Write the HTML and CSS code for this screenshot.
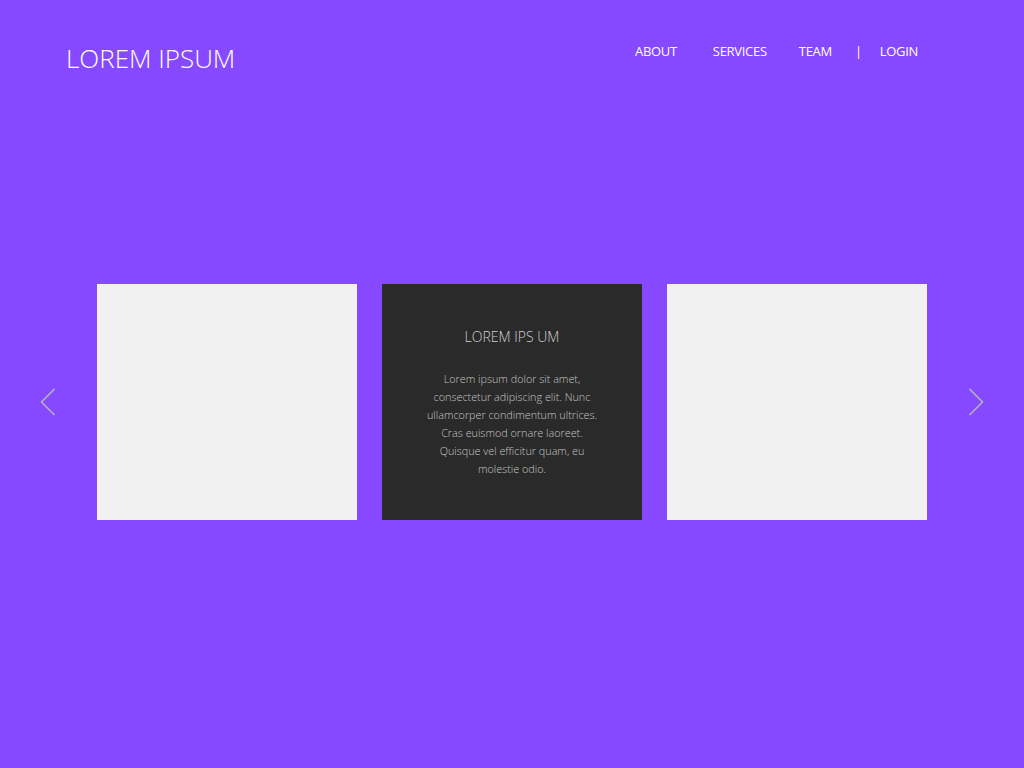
FILE: index.html
```html
<!DOCTYPE html>
<html lang="en">
<head>
<meta charset="utf-8">
<title>Lorem Ipsum</title>
<link rel="stylesheet" href="styles.css">
</head>
<body>
<div class="page">
  <header class="header">
    <div class="logo">LOREM IPSUM</div>
    <nav class="nav">
      <a class="nav-link about" href="#">ABOUT</a>
      <a class="nav-link services" href="#">SERVICES</a>
      <a class="nav-link team" href="#">TEAM</a>
      <span class="nav-sep">|</span>
      <a class="nav-link login" href="#">LOGIN</a>
    </nav>
  </header>
  <section class="carousel">
    <button class="arrow" aria-label="Previous">
      <svg width="16" height="28" viewBox="0 0 16 28"><polyline points="14.5,1 1.5,14 14.5,27" fill="none" stroke="#b4b4b4" stroke-width="1.6"/></svg>
    </button>
    <div class="cards">
      <div class="card card-light"></div>
      <div class="card card-dark">
        <h2 class="card-title">LOREM IPS UM</h2>
        <p class="card-text">Lorem ipsum dolor sit amet, consectetur adipiscing elit. Nunc ullamcorper condimentum ultrices. Cras euismod ornare laoreet. Quisque vel efficitur quam, eu molestie odio.</p>
      </div>
      <div class="card card-light"></div>
    </div>
    <button class="arrow" aria-label="Next">
      <svg width="16" height="28" viewBox="0 0 16 28"><polyline points="1.5,1 14.5,14 1.5,27" fill="none" stroke="#b4b4b4" stroke-width="1.6"/></svg>
    </button>
  </section>
</div>
</body>
</html>
```

FILE: styles.css
```css
html, body {
  margin: 0;
  padding: 0;
}
body {
  background: #8649ff;
  font-family: "Open Sans", "Liberation Sans", sans-serif;
  font-weight: 300;
  color: #fff;
}
.page {
  height: 768px;
  display: flex;
  flex-direction: column;
}
.header {
  display: flex;
  justify-content: space-between;
  align-items: flex-start;
  padding: 40px 106px 0 66px;
}
.logo {
  font-size: 26px;
  line-height: 36px;
}
.nav {
  display: flex;
  align-items: center;
  padding-top: 1px;
  font-size: 13px;
  font-weight: 400;
  line-height: 20px;
  letter-spacing: -0.3px;
}
.nav-link {
  color: #fff;
  text-decoration: none;
}
.about { margin-right: 36px; }
.services { margin-right: 32px; }
.team { margin-right: 23px; }
.nav-sep { margin-right: 18px; }
.carousel {
  display: flex;
  align-items: center;
  justify-content: space-between;
  padding: 208px 40px 0 40px;
}
.arrow {
  background: none;
  border: 0;
  padding: 0;
  width: 16px;
  height: 28px;
  cursor: pointer;
}
.arrow svg { display: block; }
.cards {
  display: flex;
  gap: 25px;
}
.card {
  width: 260px;
  height: 236px;
  box-sizing: border-box;
}
.card-light { background: #f1f1f1; }
.card-dark {
  background: #2a2a2a;
  text-align: center;
  padding: 43px 30px 0;
}
.card-title {
  margin: 0;
  font-weight: 300;
  font-size: 14px;
  line-height: 20px;
  color: #d0d0d0;
}
.card-text {
  margin: 23px auto 0;
  width: 174px;
  font-size: 10.8px;
  line-height: 18px;
  color: #c4c4c4;
}
```
